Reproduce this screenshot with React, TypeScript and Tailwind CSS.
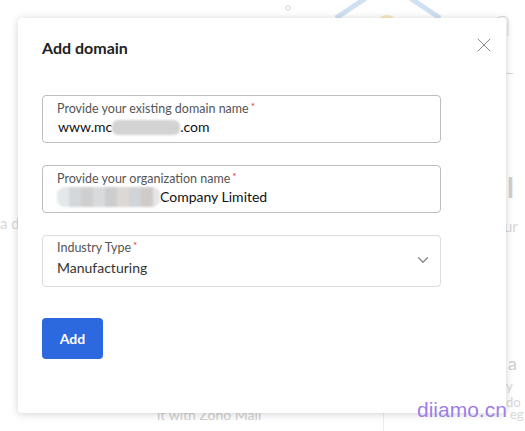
import { X, ChevronDown } from "lucide-react";

const font = { fontFamily: "Lato, 'Noto Sans', sans-serif" };

// faint page content sitting behind the dialog
const Backdrop = () => (
  <div className="absolute inset-0 overflow-hidden bg-white">
    <svg className="absolute left-0 top-0" width="525" height="40">
      <circle cx="288" cy="8" r="2.2" fill="none" stroke="#cfcfcf" strokeWidth="1" />
      <path d="M336 18 L372 -6" stroke="#cfe0f2" strokeWidth="5" />
      <path d="M440 18 L404 -6" stroke="#cfe0f2" strokeWidth="5" />
      <circle cx="387" cy="26" r="11" fill="#fbe9c4" />
      <path d="M497 18 Q507 14 508 20 L508 36" fill="none" stroke="#d6d6d6" strokeWidth="1" />
    </svg>
    <div className="absolute left-[505px] top-[73px] h-px w-[8px] bg-[#d8d8d8]" />
    <div className="absolute left-[500px] top-[166px] text-[28px] font-bold text-[#d0d0d0]" style={font}>
      il
    </div>
    <div className="absolute left-0 top-[212px] text-[15px] text-[#d8d8d8]" style={font}>
      a d
    </div>
    <div className="absolute left-[504px] top-[215px] text-[15px] text-[#d8d8d8]" style={font}>
      ur
    </div>
    <div className="absolute left-[508px] top-[350px] text-[18px] text-[#cfcfcf]" style={font}>
      a
    </div>
    <div className="absolute left-[506px] top-[378px] text-[13px] leading-4 text-[#d8d8d8]" style={font}>
      y do
    </div>
    <div className="absolute left-[510px] top-[406px] text-[13px] leading-4 text-[#d8d8d8]" style={font}>
      eg
    </div>
    <div className="absolute left-[157px] top-[404px] text-[14px] text-[#d0d0d0]" style={font}>
      it with Zoho Mail
    </div>
    <div className="absolute left-[383px] top-[413px] h-[20px] w-px bg-[#ececec]" />
  </div>
);

const Req = () => <span className="relative -top-[3px] ml-[2px] text-[10px] text-[#e0302a]">*</span>;

export default function App() {
  return (
    <div className="relative h-[431px] w-[525px] overflow-hidden" style={font}>
      <Backdrop />

      <div className="absolute left-[18px] top-[18px] h-[395px] w-[488px] rounded-[4px] bg-white px-6 pt-5 shadow-[0_1px_8px_rgba(0,0,0,0.18)]">
        <div className="flex items-center justify-between">
          <h2 className="text-[16px] font-bold leading-5 text-[#222]">Add domain</h2>
          <X className="mr-[-14px] mt-[-6px] h-[24px] w-[24px] text-[#8a8a8a]" strokeWidth={1} />
        </div>

        <div className="mt-[37px] flex w-[399px] flex-col gap-[22px]">
          <div className="h-[48px] rounded-[4px] border border-[#bdbdbd] px-[14px] pt-[5px]">
            <div className="text-[12.5px] leading-4 text-[#555]">
              Provide your existing domain name
              <Req />
            </div>
            <div className="flex items-center text-[14px] leading-5 text-[#111]">
              <span className="pl-px">www.mc</span>
              <span className="h-[15px] w-[68px] rounded-[6px] bg-[#d3d3d3] blur-[1px]" />
              <span>.com</span>
            </div>
          </div>

          <div className="h-[48px] rounded-[4px] border border-[#bdbdbd] px-[14px] pt-[5px]">
            <div className="text-[12.5px] leading-4 text-[#555]">
              Provide your organization name
              <Req />
            </div>
            <div className="flex items-center text-[14px] leading-5 text-[#111]">
              <span className="flex h-[20px] w-[103px] overflow-hidden rounded-[8px] blur-[1px]">
                <span className="w-[12px] bg-[#e4e8ea]" />
                <span className="w-[12px] bg-[#d4d8da]" />
                <span className="w-[12px] bg-[#cfcfd0]" />
                <span className="w-[12px] bg-[#d9dadb]" />
                <span className="w-[12px] bg-[#cbcdcf]" />
                <span className="w-[12px] bg-[#dcd8d6]" />
                <span className="w-[12px] bg-[#d0d4d6]" />
                <span className="w-[12px] bg-[#cfcbc9]" />
                <span className="w-[7px] bg-[#e6e6e6]" />
              </span>
              <span>Company Limited</span>
            </div>
          </div>

          <div className="flex h-[52px] items-center rounded-[4px] border border-[#dcdcdc] pl-[14px] pr-[8px]">
            <div className="flex-1 pb-[2px]">
              <div className="text-[12.5px] leading-4 text-[#555]">
                Industry Type
                <Req />
              </div>
              <div className="text-[14px] leading-6 text-[#333]">Manufacturing</div>
            </div>
            <ChevronDown className="mb-[2px] h-[18px] w-[18px] text-[#8a8a8a]" strokeWidth={1.8} />
          </div>
        </div>

        <button className="mt-[31px] h-[41px] w-[61px] rounded-[4px] bg-[#2c68de] text-[14px] font-bold text-white">
          Add
        </button>
      </div>

      <div
        className="absolute left-[417px] top-[398px] text-[21px] leading-6 text-[#9d7ee6]"
        style={{ fontFamily: "'Liberation Sans', Arial, sans-serif" }}
      >
        diiamo.cn
      </div>
    </div>
  );
}
